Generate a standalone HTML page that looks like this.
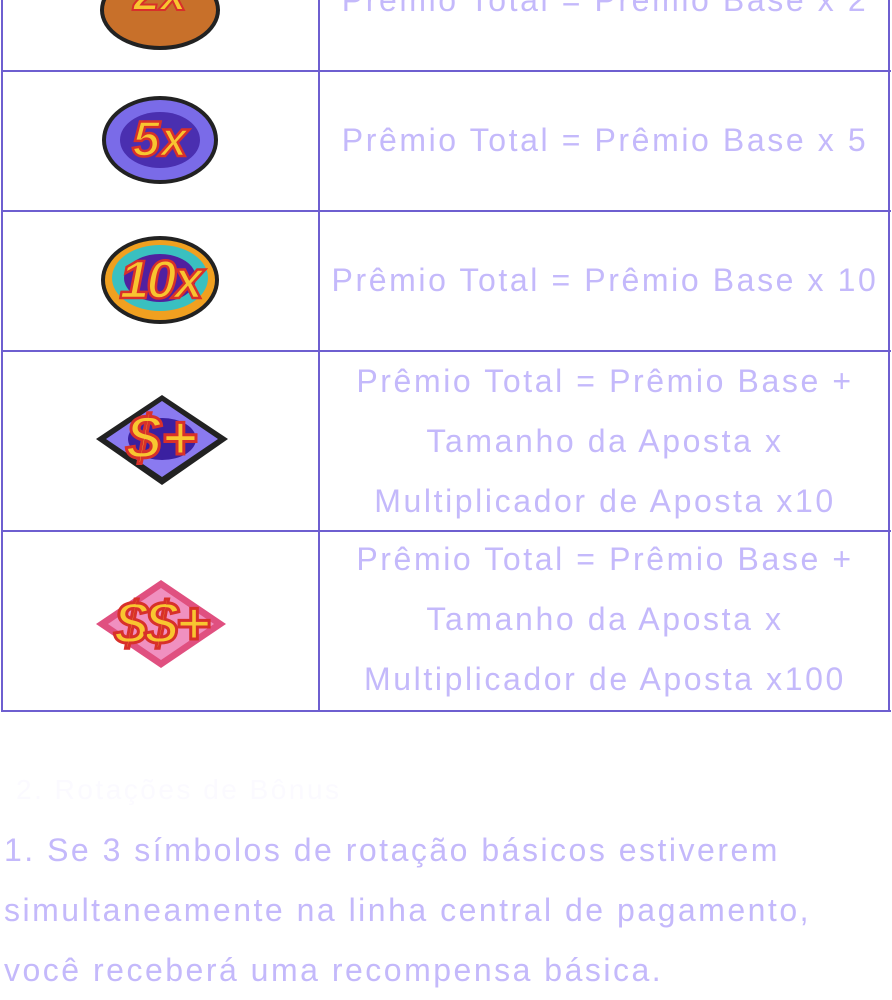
<!DOCTYPE html>
<html><head><meta charset="utf-8"><style>
body{margin:0;width:892px;height:1000px;background:#fff;overflow:hidden;position:relative;font-family:"Liberation Sans",sans-serif;color:#c4b9fb}
.h{position:absolute;left:1px;width:890px;height:2px;background:#6e5fd0}
.v{position:absolute;width:2px;background:#6e5fd0;top:-10px;height:722px}
.c{position:absolute;left:320px;width:570px;text-align:center;font-size:32px;line-height:60px;letter-spacing:2.6px;white-space:nowrap}
.ic{position:absolute}
.p{position:absolute;left:4px;font-size:32px;line-height:60px;width:888px;letter-spacing:2.5px;white-space:nowrap}
</style></head><body>
<div class="v" style="left:1px"></div><div class="v" style="left:318px"></div><div class="v" style="left:888px"></div>
<div class="h" style="top:70px"></div><div class="h" style="top:210px"></div><div class="h" style="top:350px"></div><div class="h" style="top:530px"></div><div class="h" style="top:710px"></div>

<div class="c" style="top:-30px">Prêmio Total = Prêmio Base x 2</div>
<div class="c" style="top:110px">Prêmio Total = Prêmio Base x 5</div>
<div class="c" style="top:250px">Prêmio Total = Prêmio Base x 10</div>
<div class="c" style="top:351px">Prêmio Total = Prêmio Base +<br>Tamanho da Aposta x<br>Multiplicador de Aposta x10</div>
<div class="c" style="top:529px">Prêmio Total = Prêmio Base +<br>Tamanho da Aposta x<br>Multiplicador de Aposta x100</div>

<svg class="ic" style="left:95px;top:-20px" width="130" height="75"><ellipse cx="65" cy="30" rx="60" ry="40" fill="#222"/><ellipse cx="65" cy="30" rx="56" ry="36" fill="#c8702a"/><text x="65" y="30" text-anchor="middle" font-size="48" font-weight="bold" font-style="italic" fill="#f8c630" stroke="#d8302a" stroke-width="2">2x</text></svg>
<svg class="ic" style="left:98px;top:92px" width="125" height="100"><ellipse cx="62" cy="48" rx="60" ry="47" fill="#fff"/><ellipse cx="62" cy="48" rx="58" ry="44" fill="#222"/><ellipse cx="62" cy="48" rx="54" ry="40" fill="#7a6be8"/><ellipse cx="62" cy="48" rx="40" ry="28" fill="#4a2fb0"/><text x="62" y="64" text-anchor="middle" font-size="50" font-weight="bold" font-style="italic" fill="#f8c630" stroke="#d8302a" stroke-width="2.5">5x</text></svg>
<svg class="ic" style="left:96px;top:232px" width="130" height="100"><ellipse cx="64" cy="48" rx="62" ry="47" fill="#fff"/><ellipse cx="64" cy="48" rx="59" ry="44" fill="#222"/><ellipse cx="64" cy="48" rx="55" ry="40" fill="#f0a020"/><ellipse cx="64" cy="46" rx="48" ry="33" fill="#3ac0c0"/><ellipse cx="64" cy="46" rx="36" ry="24" fill="#5020a0"/><text x="64" y="66" text-anchor="middle" font-size="54" font-weight="bold" font-style="italic" fill="#f8c630" stroke="#d8302a" stroke-width="2.5" letter-spacing="-3">10x</text></svg>
<svg class="ic" style="left:86px;top:385px" width="152" height="110"><polygon points="76,4 150,54 76,106 2,54" fill="#fff"/><polygon points="76,10 142,54 76,100 10,54" fill="#222"/><polygon points="76,16 132,54 76,92 20,54" fill="#8a7af0"/><ellipse cx="76" cy="54" rx="34" ry="21" fill="#3a20a0"/><text x="76" y="74" text-anchor="middle" font-size="62" font-weight="bold" font-style="italic" fill="#f8c630" stroke="#d8302a" stroke-width="3">$+</text></svg>
<svg class="ic" style="left:80px;top:568px" width="162" height="112"><polygon points="81,6 156,56 81,106 6,56" fill="#fff"/><polygon points="81,12 146,56 81,100 16,56" fill="#e05080"/><polygon points="81,20 134,56 81,92 28,56" fill="#f090c0"/><text x="81" y="76" text-anchor="middle" font-size="60" font-weight="bold" font-style="italic" fill="#f8c630" stroke="#d8302a" stroke-width="3" letter-spacing="-3">$$+</text></svg>

<div class="p" style="top:760px;color:#fbfaff;font-size:28px;left:16px">2. Rotações de Bônus</div>
<div class="p" style="top:820px">1. Se 3 símbolos de rotação básicos estiverem<br>simultaneamente na linha central de pagamento,<br>você receberá uma recompensa básica.</div>
</body></html>
